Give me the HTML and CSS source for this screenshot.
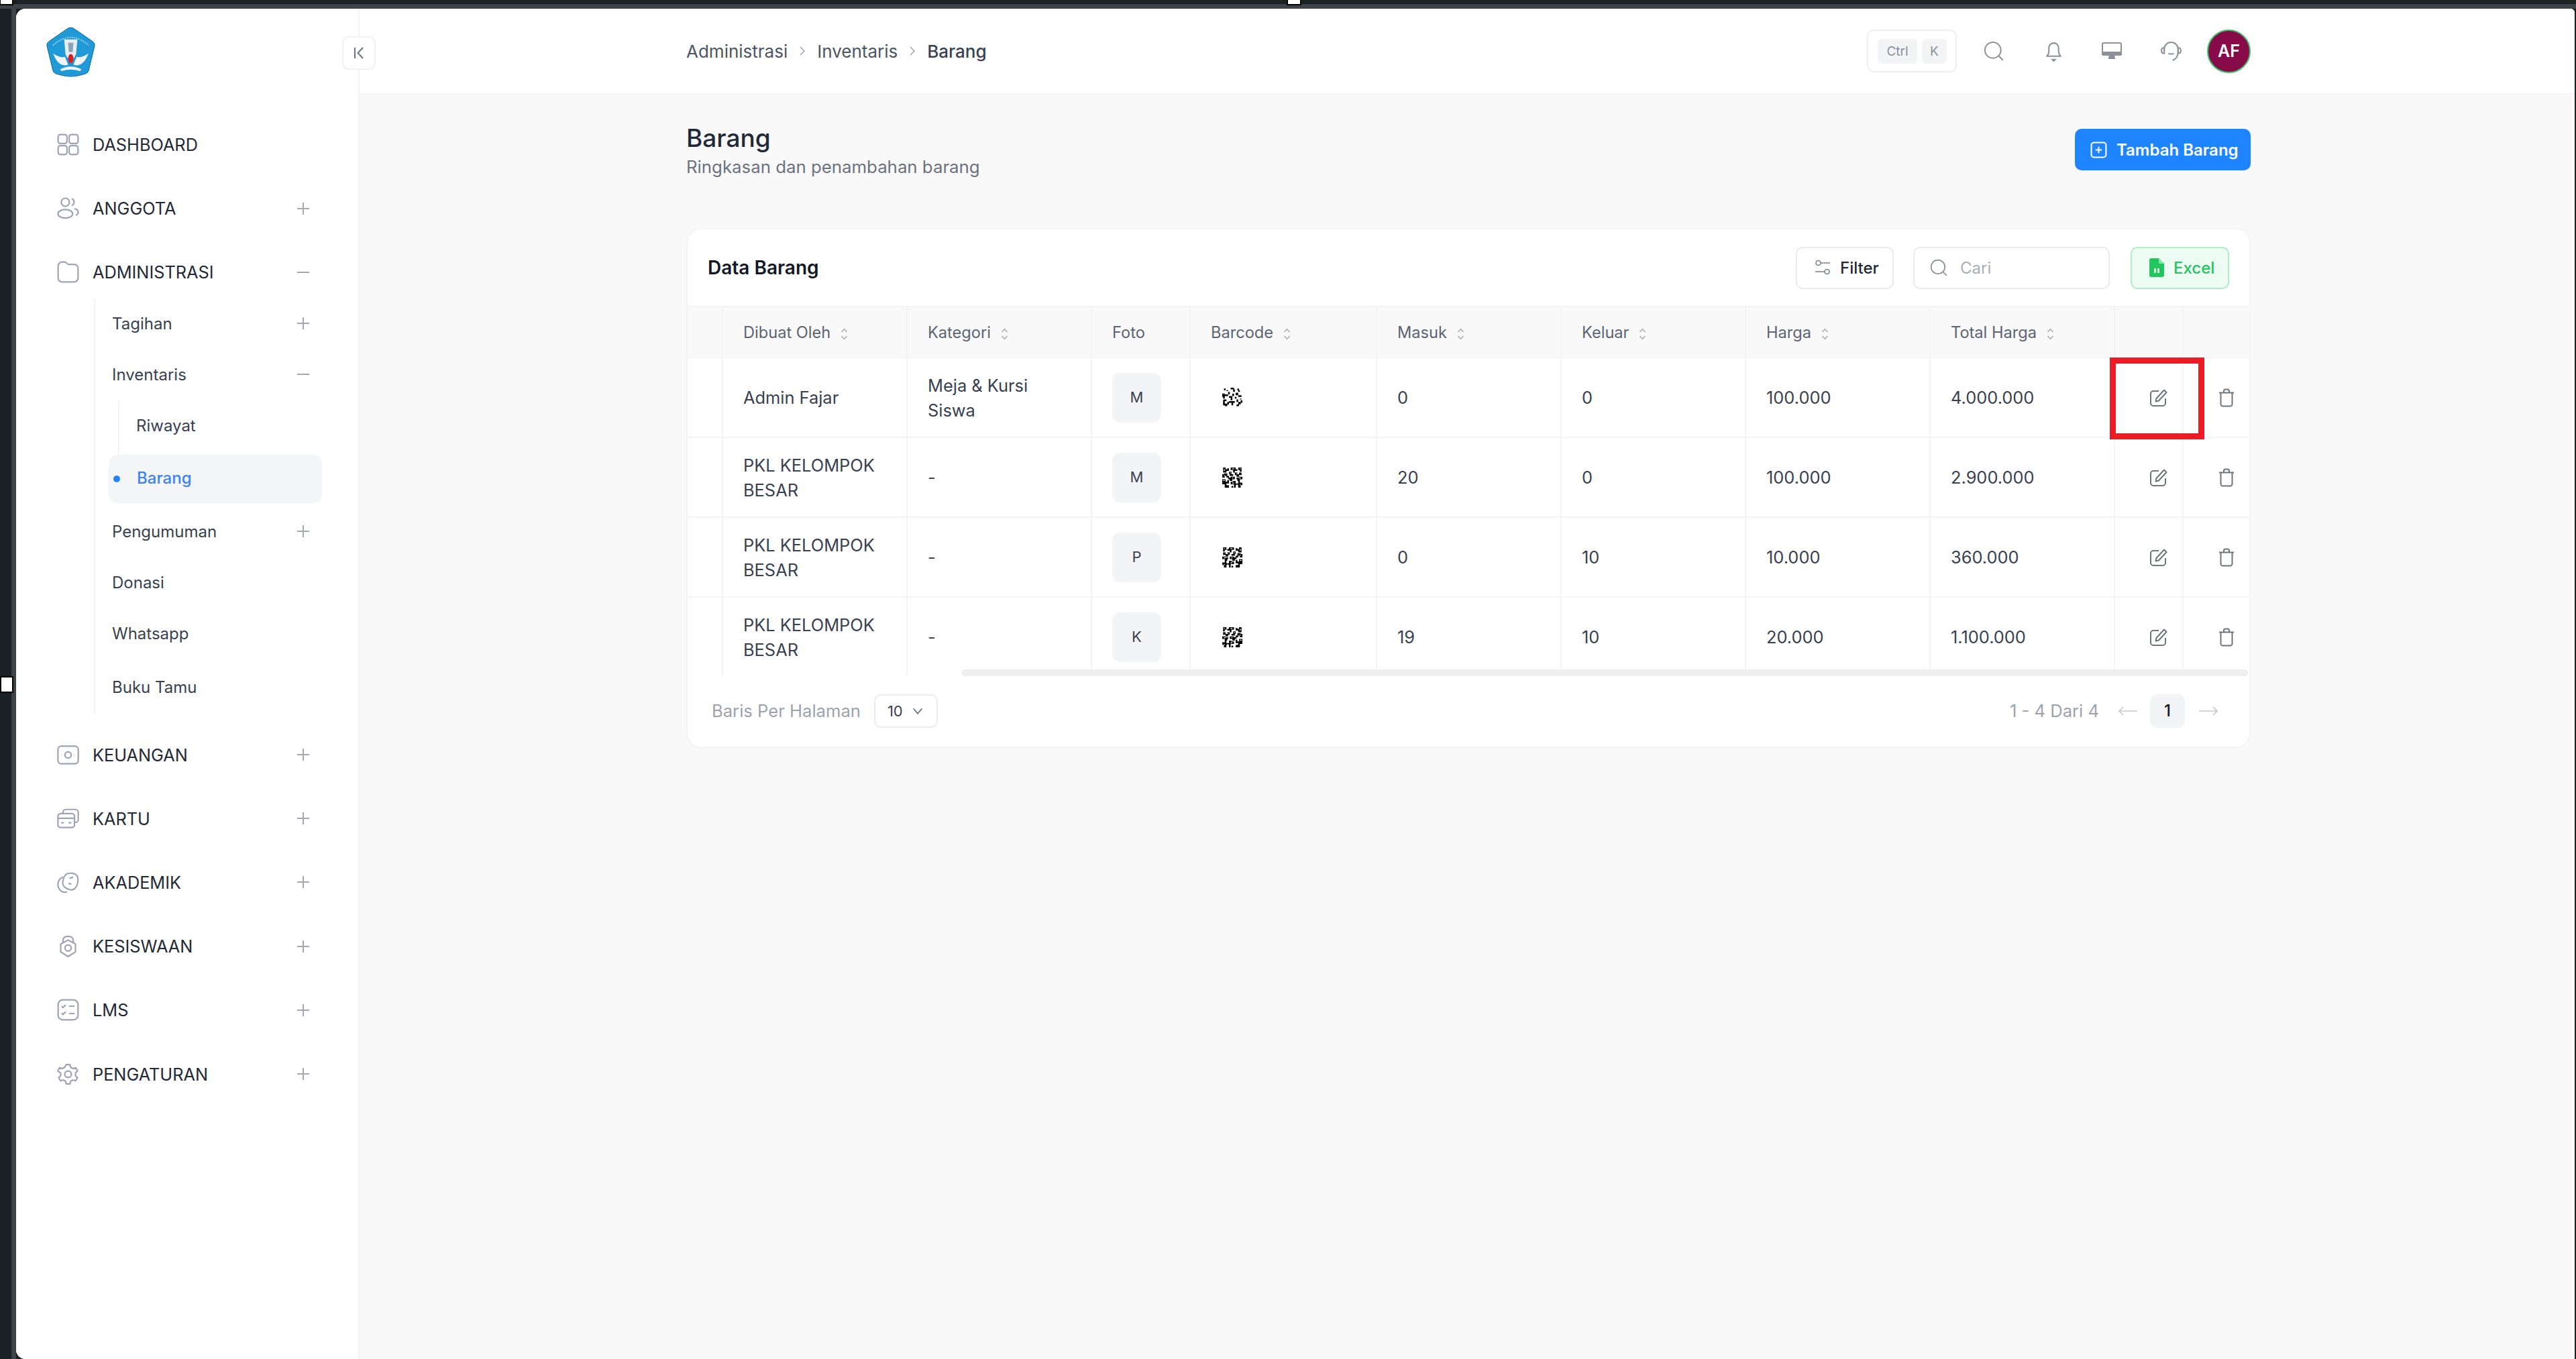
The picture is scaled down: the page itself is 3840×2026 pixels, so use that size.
FILE: index.html
```html
<!DOCTYPE html>
<html lang="en">

<head>
  <meta charset="UTF-8">
  <meta name="viewport" content="width=device-width, initial-scale=1.0">
  <title>Barang</title>
  <link rel="stylesheet" href="styles.css">
</head>

<body>

  <svg class="defs" width="0" height="0">
    <symbol id="i-dash" viewBox="0 0 24 24"><rect x="1.2" y="1.2" width="9.6" height="9.6" rx="2.4"/><rect x="13.2" y="1.2" width="9.6" height="9.6" rx="2.4"/><rect x="1.2" y="13.2" width="9.6" height="9.6" rx="2.4"/><rect x="13.2" y="13.2" width="9.6" height="9.6" rx="2.4"/></symbol>
    <symbol id="i-users" viewBox="0 0 24 24"><circle cx="9" cy="5.5" r="4.4"/><ellipse cx="9" cy="18" rx="8" ry="4.6"/><path d="M16 1.6a4 4 0 0 1 0 7.4M19 12.5c2.6.6 4 2.2 4 3.8 0 1.400-1 2.600-2.700 3.300"/></symbol>
    <symbol id="i-folder" viewBox="0 0 24 24"><path d="M1.200 5.500a4.300 4.300 0 0 1 4.300-4.300h3.200c1.400 0 2.200 2.500 3.600 2.500h6.200a4.300 4.300 0 0 1 4.300 4.300v10.500a4.300 4.300 0 0 1-4.300 4.300h-13a4.300 4.300 0 0 1-4.300-4.300z"/></symbol>
    <symbol id="i-money" viewBox="0 0 24 24"><rect x="1" y="2.500" width="22" height="19" rx="3.500"/><circle cx="12" cy="12" r="3.400"/><path d="M5 12h.5M18.500 12h.5"/></symbol>
    <symbol id="i-card" viewBox="0 0 24 24"><path d="M6.500 6V5a3 3 0 0 1 3-3h10.500a3 3 0 0 1 3 3v8a3 3 0 0 1-3 3h-1"/><rect x="1" y="6.500" width="18" height="15" rx="3"/><path d="M1 11.500h18M4.500 16.500h3M12.500 16.500h3"/></symbol>
    <symbol id="i-acad" viewBox="0 0 24 24"><path d="M6.500 6.200A8.800 8.800 0 0 0 3 20c2 2.500 5 3.200 8 2.200"/><path d="M11 2.600c3.500-1.200 8-.5 10 1.400 2 2 2 6 1 10-1 3.500-3.800 6.800-7.500 6-3.500-.8-7-2.500-8-5.500-1-3.500 1-10.500 4.500-11.900z"/><path d="M13.500 7.500l4-1M12.500 13l3 1"/></symbol>
    <symbol id="i-bell-weight" viewBox="0 0 24 24"><path d="M6.500 8V5.500a4 4 0 0 1 4-4h3a4 4 0 0 1 4 4V8"/><path d="M12 5.500l8 4.200v8.600l-8 5-8-5V9.700z" stroke-linejoin="round"/><circle cx="12" cy="14" r="3.400"/></symbol>
    <symbol id="i-lms" viewBox="0 0 24 24"><rect x="1.200" y="1.200" width="21.600" height="21.600" rx="5"/><path d="M5 8l1.500 1.500L9.500 6.500M5 15.500L6.500 17l3-3M13 8h6M13 16h6"/></symbol>
    <symbol id="i-gear" viewBox="0 0 24 24"><circle cx="12" cy="12" r="3.600"/><path d="M10 1.500h4l.8 3 2.400 1.300 3-.9 2 3.500-2.200 2.200v2.800l2.200 2.200-2 3.500-3-.9-2.400 1.300-.8 3h-4l-.8-3-2.400-1.300-3 .9-2-3.500 2.200-2.200v-2.800L.8 8.400l2-3.500 3 .9 2.400-1.300z" stroke-linejoin="round"/></symbol>
    <symbol id="i-plus" viewBox="0 0 18 18"><path d="M9 0v18M0 9h18"/></symbol>
    <symbol id="i-minus" viewBox="0 0 18 18"><path d="M0 9h18"/></symbol>
    <symbol id="i-search" viewBox="0 0 24 24"><circle cx="11" cy="11" r="9.500"/><path d="M18 18l5 5"/></symbol>
    <symbol id="i-edit" viewBox="0 0 26 26"><path d="M13 3H5a4 4 0 0 0-4 4v14a4 4 0 0 0 4 4h14a4 4 0 0 0 4-4v-7"/><path d="M21 1.500l3.500 3.500L13 17.500l-4.500 1 1-4.500z" stroke-linejoin="round"/></symbol>
    <symbol id="i-trash" viewBox="0 0 24 28"><path d="M1 6.500h22M8 6V4a2.500 2.500 0 0 1 2.500-2.500h3A2.500 2.500 0 0 1 16 4v2"/><path d="M3.500 6.500v17a3 3 0 0 0 3 3h11a3 3 0 0 0 3-3v-17"/></symbol>
    <symbol id="i-sort" viewBox="0 0 11 18"><path d="M1.500 6L5.500 1.500 9.500 6M1.500 12l4 4.500 4-4.500"/></symbol>
    <symbol id="i-chev" viewBox="0 0 12 8"><path d="M1 1l5 6 5-6"/></symbol>
    <symbol id="qr-a" viewBox="0 0 24 24"><path d="M2 1h2v2H2zM5 3h2v1H5zM10 0h4v2h1v3h-2V2h-3zM18 1h2v2h1v2h-2V3h-1zM0 7h3v1h2v2H3v3H1v-2H0zM7 5h2v3H7v2H5V8h2zM12 7h2v3h-2v5h-2v-3H8v-2h4zM16 6h3v3h2v2h-2V9h-3zM21 9h2v2h-2zM2 14h3v2H3v3h3v3H3v-1H1v-6zM8 16h7v2h-2v3h-2v-3H8v2H6v-3h2zM17 14h2v3h3v-2h2v3h-2v2h-2v2h-3v-2h2v-3h-2zM15 11h2v2h-2zM21 13h2v1h-2z"/></symbol>
    <symbol id="qr-b" viewBox="0 0 24 24"><path d="M1 0h3v2h2V1h2v3H5v2H1zM10 0h6v2h2v2h-3v2h-2V3h-3zM19 0h4v5h-2V3h-2zM8 5h3v3h2v2h-4V8H8zM15 6h3v2h2v-2h3v3h-3v2h-3V9h-2zM0 8h2V7h4v3h2v2H5v-2H3v2H0zM10 11h5v3h-3v2h-3v-2H7v-2h3zM17 12h3v-1h4v3h-3v2h-3v-2h-1zM0 14h4v3h2v-2h2v4H5v2h3v3H3v-4H0zM10 17h3v-1h3v3h3v-3h2v2h3v3h-2v3h-3v-3h-3v3h-2v-4h-4zM11 22h2v2h-2z"/><path fill="#fff" d="M2 2h1v2H2zM12 1h2v1h-2zM21 1h1v1h-1zM9 6h1v1H9zM17 7h1v1h-1zM2 9h1v1H2zM12 12h1v1h-1zM20 12h2v1h-2zM1 15h2v1H1zM6 20h2v1H6zM12 18h2v1h-2zM17 20h1v2h-1zM21 20h1v1h-1z"/></symbol>
  </svg>

  <span class="handle handle-top-left"></span>
  <span class="handle handle-top-mid"></span>
  <span class="handle handle-left-mid"></span>

  <div class="app">

    <aside class="sidebar">
      <div class="logo">
        <svg viewBox="0 0 74 76" width="73" height="75">
          <path d="M33 2q4-2 8 0L70 22q4 3 3 7L64 66q-1 4-5 5c-7 2-14 4-22 4s-15-2-22-4q-4-1-5-5L1 29q-1-4 3-7z" fill="#1f9ad6" stroke="#11679e" stroke-width="1"/>
          <path d="M10 28Q37 4 64 28" fill="none" stroke="#9bd4ee" stroke-width="2" stroke-dasharray="2 1.500"/>
          <path d="M27 19h20l-2 22-3 6h-10l-3-6z" fill="#e8edf2"/>
          <path d="M33 24h8l-1 14h-6z" fill="#8aa3b8"/>
          <path d="M10 40c3 6 5 13 13 17 5 2 8 1 10 0l-5-12c-4 2-7 0-8 0-4-1-7-3-10-5zM64 40c-3 6-5 13-13 17-5 2-8 1-10 0l5-12c4 2 7 0 8 0 4-1 7-3 10-5z" fill="#f1f4f6"/>
          <ellipse cx="37" cy="48" rx="4" ry="7" fill="#d2232a"/>
          <path d="M21 64q16-8 32 0l-2 3q-14-5-28 0z" fill="#f1f4f6"/>
        </svg>
      </div>

      <nav class="menu">
        <a class="menu_item"><svg class="menu_icon"><use href="#i-dash"/></svg><span>DASHBOARD</span></a>
        <a class="menu_item"><svg class="menu_icon"><use href="#i-users"/></svg><span>ANGGOTA</span><svg class="toggle"><use href="#i-plus"/></svg></a>
        <div class="menu_group">
          <a class="menu_item"><svg class="menu_icon"><use href="#i-folder"/></svg><span>ADMINISTRASI</span><svg class="toggle"><use href="#i-minus"/></svg></a>
          <div class="submenu">
            <a class="sub_item"><span>Tagihan</span><svg class="toggle"><use href="#i-plus"/></svg></a>
            <a class="sub_item"><span>Inventaris</span><svg class="toggle"><use href="#i-minus"/></svg></a>
            <div class="subsub">
              <a class="subsub_item">Riwayat</a>
            </div>
            <a class="sub_active"><i class="dot"></i>Barang</a>
            <a class="sub_item"><span>Pengumuman</span><svg class="toggle"><use href="#i-plus"/></svg></a>
            <a class="sub_item"><span>Donasi</span></a>
            <a class="sub_item"><span>Whatsapp</span></a>
            <a class="sub_item"><span>Buku Tamu</span></a>
          </div>
        </div>
        <a class="menu_item"><svg class="menu_icon"><use href="#i-money"/></svg><span>KEUANGAN</span><svg class="toggle"><use href="#i-plus"/></svg></a>
        <a class="menu_item"><svg class="menu_icon"><use href="#i-card"/></svg><span>KARTU</span><svg class="toggle"><use href="#i-plus"/></svg></a>
        <a class="menu_item"><svg class="menu_icon"><use href="#i-acad"/></svg><span>AKADEMIK</span><svg class="toggle"><use href="#i-plus"/></svg></a>
        <a class="menu_item"><svg class="menu_icon"><use href="#i-bell-weight"/></svg><span>KESISWAAN</span><svg class="toggle"><use href="#i-plus"/></svg></a>
        <a class="menu_item"><svg class="menu_icon"><use href="#i-lms"/></svg><span>LMS</span><svg class="toggle"><use href="#i-plus"/></svg></a>
        <a class="menu_item"><svg class="menu_icon"><use href="#i-gear"/></svg><span>PENGATURAN</span><svg class="toggle"><use href="#i-plus"/></svg></a>
      </nav>
    </aside>

    <button class="collapse">
      <svg viewBox="0 0 16 18" width="16" height="18"><path d="M2 1v16M14 1L6.500 9 14 17"/></svg>
    </button>

    <div class="page">

      <header class="topbar">
        <div class="topbar_inner">
          <div class="crumbs">
            <span>Administrasi</span>
            <svg class="crumb_sep" viewBox="0 0 8 14"><path d="M1 1l6 6-6 6"/></svg>
            <span>Inventaris</span>
            <svg class="crumb_sep" viewBox="0 0 8 14"><path d="M1 1l6 6-6 6"/></svg>
            <b>Barang</b>
          </div>
          <div class="tools">
            <div class="kbd"><span class="kbd_ctrl">Ctrl</span><span class="kbd_k">K</span></div>
            <svg class="tool tool-search"><use href="#i-search"/></svg>
            <svg class="tool tool-bell" viewBox="0 0 26 30"><path d="M3 22c2-2 3-4 3-8V10a7 7 0 0 1 14 0v4c0 4 1 6 3 8z" stroke-linejoin="round"/><path d="M11 27h4l-2 2z" fill="#8c9198"/></svg>
            <svg class="tool tool-screen" viewBox="0 0 30 26"><path d="M3 1h24a2 2 0 0 1 2 2v14a2 2 0 0 1-2 2H3a2 2 0 0 1-2-2V3a2 2 0 0 1 2-2z"/><path d="M1 15h28v2a2 2 0 0 1-2 2H3a2 2 0 0 1-2-2z" fill="#8c9198"/><path d="M12 19l-1 5h8l-1-5z" fill="#8c9198"/></svg>
            <svg class="tool tool-head" viewBox="0 0 30 30"><path d="M5 15V12a10 10 0 0 1 20 0v3c0 8-4 12-8 13"/><path d="M5 10C2 10 1 12 1 14s1 4 4 4zM25 10c3 0 4 2 4 4s-1 4-4 4z"/><path d="M11 18q4 2 8 0"/></svg>
            <div class="avatar">AF</div>
          </div>
        </div>
      </header>

      <main class="content">

        <div class="title_row">
          <div>
            <h1 class="title">Barang</h1>
            <p class="subtitle">Ringkasan dan penambahan barang</p>
          </div>
          <button class="btn_add">
            <svg viewBox="0 0 24 24" width="25" height="25"><rect x="1.500" y="1.500" width="21" height="21" rx="3.500"/><path d="M12 7.500v9M7.500 12h9"/></svg>
            Tambah Barang
          </button>
        </div>

        <section class="card">
          <div class="card_head">
            <h2 class="card_title">Data Barang</h2>
            <button class="btn_filter">
              <svg viewBox="0 0 24 24" width="24" height="24"><circle cx="5.500" cy="5" r="3.500"/><path d="M9 5h14M1 18h14"/><circle cx="18.500" cy="18" r="3.500"/></svg>
              Filter
            </button>
            <div class="search">
              <svg><use href="#i-search"/></svg>
              <span>Cari</span>
            </div>
            <button class="btn_excel">
              <svg viewBox="0 0 22 28" width="22" height="28"><path d="M3 0h11l8 8v17a3 3 0 0 1-3 3H3a3 3 0 0 1-3-3V3a3 3 0 0 1 3-3z" fill="#22c55e"/><path d="M14 0l8 8h-8z" fill="#86e5a8"/><path d="M7 15h3v7H7zM12 15h3v7h-3z" fill="#d9f8e4"/></svg>
              Excel
            </button>
          </div>

          <div class="table_wrap">
            <table class="data">
              <colgroup>
                <col class="c-gutter"><col class="c-wide"><col class="c-wide"><col class="c-foto"><col class="c-code"><col class="c-wide"><col class="c-wide"><col class="c-wide"><col class="c-wide"><col class="c-act"><col class="c-act">
              </colgroup>
              <thead>
                <tr>
                  <th></th>
                  <th>Dibuat Oleh<svg class="sort"><use href="#i-sort"/></svg></th>
                  <th>Kategori<svg class="sort"><use href="#i-sort"/></svg></th>
                  <th>Foto</th>
                  <th>Barcode<svg class="sort"><use href="#i-sort"/></svg></th>
                  <th>Masuk<svg class="sort"><use href="#i-sort"/></svg></th>
                  <th>Keluar<svg class="sort"><use href="#i-sort"/></svg></th>
                  <th>Harga<svg class="sort"><use href="#i-sort"/></svg></th>
                  <th>Total Harga<svg class="sort"><use href="#i-sort"/></svg></th>
                  <th></th>
                  <th></th>
                </tr>
              </thead>
              <tbody>
                <tr>
                  <td></td>
                  <td>Admin Fajar</td>
                  <td>Meja &amp; Kursi Siswa</td>
                  <td><span class="chip">M</span></td>
                  <td><svg class="qr"><use href="#qr-a"/></svg></td>
                  <td>0</td>
                  <td>0</td>
                  <td>100.000</td>
                  <td>4.000.000</td>
                  <td class="act"><svg class="ic-edit"><use href="#i-edit"/></svg><span class="highlight"></span></td>
                  <td class="act"><svg class="ic-trash"><use href="#i-trash"/></svg></td>
                </tr>
                <tr>
                  <td></td>
                  <td>PKL KELOMPOK BESAR</td>
                  <td>-</td>
                  <td><span class="chip">M</span></td>
                  <td><svg class="qr"><use href="#qr-b"/></svg></td>
                  <td>20</td>
                  <td>0</td>
                  <td>100.000</td>
                  <td>2.900.000</td>
                  <td class="act"><svg class="ic-edit"><use href="#i-edit"/></svg></td>
                  <td class="act"><svg class="ic-trash"><use href="#i-trash"/></svg></td>
                </tr>
                <tr>
                  <td></td>
                  <td>PKL KELOMPOK BESAR</td>
                  <td>-</td>
                  <td><span class="chip">P</span></td>
                  <td><svg class="qr flip"><use href="#qr-b"/></svg></td>
                  <td>0</td>
                  <td>10</td>
                  <td>10.000</td>
                  <td>360.000</td>
                  <td class="act"><svg class="ic-edit"><use href="#i-edit"/></svg></td>
                  <td class="act"><svg class="ic-trash"><use href="#i-trash"/></svg></td>
                </tr>
                <tr>
                  <td></td>
                  <td>PKL KELOMPOK BESAR</td>
                  <td>-</td>
                  <td><span class="chip">K</span></td>
                  <td><svg class="qr flip"><use href="#qr-b"/></svg></td>
                  <td>19</td>
                  <td>10</td>
                  <td>20.000</td>
                  <td>1.100.000</td>
                  <td class="act"><svg class="ic-edit"><use href="#i-edit"/></svg></td>
                  <td class="act"><svg class="ic-trash"><use href="#i-trash"/></svg></td>
                </tr>
              </tbody>
            </table>
            <div class="scrollbar"></div>
          </div>

          <div class="card_foot">
            <span class="muted">Baris Per Halaman</span>
            <div class="select">10<svg class="chev"><use href="#i-chev"/></svg></div>
            <span class="muted range">1 - 4 Dari 4</span>
            <svg class="arrow" viewBox="0 0 28 14"><path d="M28 7H1M7 1L1 7l6 6"/></svg>
            <span class="page_num">1</span>
            <svg class="arrow" viewBox="0 0 28 14"><path d="M0 7h27M21 1l6 6-6 6"/></svg>
          </div>
        </section>

      </main>
    </div>
  </div>

</body>

</html>
```

FILE: styles.css
```css
* {
  box-sizing: border-box;
  font-family: "Inter", "Liberation Sans", sans-serif;
}
html, body {
  height: 100%;
}
body {
  margin: 0;
  padding: 13px 2px 0 24px;
  background: linear-gradient(#1a2124 6px, #3c4248 6px, #3c4248 13px, #1a2124 13px);
  overflow: hidden;
  position: relative;
}
body::before {
  content: "";
  position: absolute;
  left: 17px;
  top: 6px;
  bottom: 0;
  width: 7px;
  background: #3c4248;
}
.defs {
  position: absolute;
}
symbol {
  overflow: visible;
}

/* selection handles from the capture tool */
.handle {
  position: absolute;
  background: #fff;
  border: 2px solid #000;
  z-index: 5;
}
.handle-top-left { left: -1px; top: -8px; width: 21px; height: 16px; }
.handle-top-mid { left: 1918px; top: -8px; width: 22px; height: 16px; }
.handle-left-mid { left: 0; top: 1008px; width: 20px; height: 25px; }

.app {
  display: flex;
  height: 100%;
  position: relative;
  background: #f9f9fa;
  border-radius: 14px 6px 0 14px;
  overflow: hidden;
}

/* sidebar */
.sidebar {
  width: 512px;
  flex: none;
  background: #fff;
  border-right: 2px solid #f3f4f6;
  padding: 27px 0 0 61px;
}
.logo {
  height: 137px;
  margin-left: -16px;
}
.menu {
  display: flex;
  flex-direction: column;
  gap: 18.2px;
  width: 403px;
}
.menu_item, .sub_item {
  display: flex;
  align-items: center;
  height: 77px;
  color: #1f2937;
  font-size: 25.3px;
}
.menu_icon {
  width: 33px;
  height: 33px;
  margin-right: 20px;
  fill: none;
  stroke: #a0a3b5;
  stroke-width: 1.6;
}
.toggle {
  width: 18px;
  height: 18px;
  margin-left: auto;
  margin-right: 27px;
  fill: none;
  stroke: #a5a8b0;
  stroke-width: 2;
}
.menu_group {
  margin-bottom: 4px;
}
.submenu {
  margin-left: 55px;
  padding-left: 25px;
  border-left: 2px solid #f3f4f6;
  height: 620px;
}
.sub_item {
  height: 76px;
  font-size: 24px;
  color: #374151;
}
.sub_item:last-child {
  margin-top: 4px;
}
.subsub {
  margin-left: 9px;
  padding-left: 25px;
  padding-bottom: 6px;
  border-left: 2px solid #f3f4f6;
}
.subsub_item {
  display: flex;
  align-items: center;
  height: 76px;
  font-size: 24px;
  color: #374151;
}
.sub_active {
  display: flex;
  align-items: center;
  width: 318px;
  height: 72px;
  margin-left: -5px;
  padding: 0 0 3px 7px;
  border-radius: 14px;
  background: #f4f5f7;
  color: #3b82f6;
  font-size: 24px;
  font-weight: 500;
  margin-bottom: 4px;
}
.dot {
  width: 10px;
  height: 10px;
  margin: 3px 25px 0 0;
  border-radius: 50%;
  background: #1f84ff;
}

.collapse {
  position: absolute;
  left: 486px;
  top: 41px;
  width: 50px;
  height: 50px;
  padding: 0;
  background: #fff;
  border: 2px solid #f0f1f3;
  border-radius: 10px;
  display: flex;
  align-items: center;
  justify-content: center;
}
.collapse svg {
  fill: none;
  stroke: #6b7280;
  stroke-width: 2;
}

/* page */
.page {
  flex: 1;
  min-width: 0;
}
.topbar {
  height: 128px;
  background: #fff;
  border-bottom: 2px solid #f3f4f6;
}
.topbar_inner {
  width: 2332px;
  margin-left: 487px;
  height: 100%;
  display: flex;
  align-items: center;
  justify-content: space-between;
}
.crumbs {
  display: flex;
  align-items: center;
  gap: 18px;
  font-size: 26px;
  color: #4b5563;
}
.crumbs b {
  font-weight: 500;
  color: #374151;
}
.crumb_sep {
  width: 8px;
  height: 14px;
  fill: none;
  stroke: #9ca3af;
  stroke-width: 1.5;
}
.tools {
  display: flex;
  align-items: center;
}
.kbd {
  display: flex;
  align-items: center;
  gap: 7px;
  width: 134px;
  height: 64px;
  padding-left: 14px;
  background: #fff;
  border: 2px solid #eeeff1;
  border-radius: 10px;
  font-size: 19px;
  color: #8b9099;
  margin-right: 40px;
}
.kbd span {
  display: flex;
  align-items: center;
  justify-content: center;
  height: 37px;
  background: #f3f4f6;
  border-radius: 6px;
}
.kbd_ctrl { width: 59px; }
.kbd_k { width: 37px; }
.tool {
  fill: none;
  stroke: #8c9198;
  stroke-width: 2;
}
.tool-search { width: 30px; height: 30px; margin-right: 61px; stroke-width: 1.6; }
.tool-bell { width: 27px; height: 31px; margin-right: 58px; }
.tool-screen { width: 30px; height: 26px; margin-right: 58px; }
.tool-head { width: 31px; height: 31px; margin-right: 38px; }
.avatar {
  width: 65px;
  height: 65px;
  border-radius: 50%;
  background: #880b49;
  border: 2px solid #3fbf6a;
  color: #fff;
  font-size: 25px;
  font-weight: 600;
  display: flex;
  align-items: center;
  justify-content: center;
}

.content {
  width: 2332px;
  margin-left: 487px;
}
.title_row {
  display: flex;
  justify-content: space-between;
  padding-top: 40px;
  height: 199px;
}
.title {
  margin: 0;
  font-size: 37px;
  line-height: 50px;
  font-weight: 500;
  color: #1f2937;
}
.subtitle {
  margin: 0;
  font-size: 25.8px;
  line-height: 36px;
  color: #6b7280;
}
.btn_add {
  display: flex;
  align-items: center;
  gap: 14px;
  width: 262px;
  height: 62px;
  margin-top: 11px;
  padding: 0 0 0 23px;
  background: #1f84ff;
  border: 0;
  border-radius: 10px;
  color: #fff;
  font-size: 24px;
  font-weight: 600;
}
.btn_add svg {
  fill: none;
  stroke: #fff;
  stroke-width: 2;
}

/* card */
.card {
  background: #fff;
  border: 2px solid #f3f4f6;
  border-radius: 22px;
  height: 775px;
  overflow: hidden;
}
.card_head {
  display: flex;
  align-items: center;
  height: 116px;
  padding: 0 30px 0 30px;
  border-bottom: 2px solid #f3f4f6;
}
.card_title {
  margin: 0 auto 0 0;
  font-size: 28px;
  font-weight: 600;
  color: #111827;
}
.btn_filter, .search, .btn_excel {
  display: flex;
  align-items: center;
  height: 63px;
  border-radius: 10px;
  border: 2px solid #e9eaec;
  background: #fff;
  font-size: 24px;
}
.btn_filter {
  width: 146px;
  gap: 14px;
  padding: 0 0 0 26px;
  color: #1f2937;
  font-weight: 500;
}
.btn_filter svg {
  fill: none;
  stroke: #7b8088;
  stroke-width: 1.6;
}
.search {
  width: 293px;
  margin-left: 29px;
  padding-left: 23px;
  gap: 19px;
  color: #a9aeb6;
}
.search svg {
  width: 26px;
  height: 26px;
  fill: none;
  stroke: #8c9198;
  stroke-width: 1.6;
}
.btn_excel {
  width: 147px;
  margin-left: 31px;
  padding: 0 0 0 26px;
  gap: 14px;
  background: #edfcf2;
  border-color: #aeeec5;
  color: #22c55e;
  font-weight: 500;
}

/* table */
.table_wrap {
  height: 550px;
  position: relative;
  overflow: hidden;
}
.data {
  width: 2329px;
  table-layout: fixed;
  border-collapse: collapse;
  font-size: 25.4px;
  color: #374151;
}
.c-gutter { width: 52px; }
.c-wide { width: 275px; }
.c-foto { width: 147px; }
.c-code { width: 278px; }
.c-act { width: 102px; }
.data th, .data td {
  padding: 0 30px;
  text-align: left;
  border-left: 2px solid #f3f4f6;
  border-bottom: 2px solid #f3f4f6;
}
.data tr > :first-child {
  border-left: 0;
}
.data th {
  height: 75px;
  background: #f9f9fa;
  font-weight: 400;
  font-size: 23.6px;
  color: #5b6472;
}
.data td {
  height: 119px;
  line-height: 37px;
}
.sort {
  width: 11px;
  height: 18px;
  margin-left: 15px;
  vertical-align: -3px;
  fill: none;
  stroke: #a4a9b0;
  stroke-width: 1.4;
}
.chip {
  display: flex;
  align-items: center;
  justify-content: center;
  width: 73px;
  height: 74px;
  border-radius: 12px;
  background: #f3f4f6;
  font-size: 22px;
  color: #374151;
}
.qr {
  width: 30px;
  height: 30px;
  display: block;
  margin-left: 17px;
  fill: #000;
}
.flip {
  transform: scaleX(-1);
}
.data td.act {
  padding: 0;
  position: relative;
}
.ic-edit {
  display: block;
  width: 26px;
  height: 26px;
  margin-left: 52px;
  fill: none;
  stroke: #6f747b;
  stroke-width: 2;
}
.ic-trash {
  display: block;
  width: 24px;
  height: 28px;
  margin-left: 52px;
  fill: none;
  stroke: #6f747b;
  stroke-width: 2;
}
.highlight {
  position: absolute;
  left: -8px;
  top: -1px;
  width: 141px;
  height: 122px;
  border: 9px solid #ed1c24;
  z-index: 2;
}
.scrollbar {
  position: absolute;
  left: 408px;
  right: 2px;
  bottom: 0;
  height: 10px;
  border-radius: 5px;
  background: #efefef;
}

.card_foot {
  display: flex;
  align-items: center;
  height: 103px;
  padding: 0 47px 0 36px;
  font-size: 25.6px;
}
.muted {
  color: #9ca3af;
}
.select {
  display: flex;
  align-items: center;
  gap: 14px;
  width: 95px;
  height: 50px;
  margin-left: 20px;
  padding-left: 18px;
  border: 2px solid #ebecee;
  border-radius: 10px;
  color: #374151;
  font-size: 22px;
}
.chev {
  width: 16px;
  height: 10px;
  fill: none;
  stroke: #6b7280;
  stroke-width: 1.4;
}
.range {
  margin-left: auto;
}
.arrow {
  width: 28px;
  height: 14px;
  margin-left: 29px;
  fill: none;
  stroke: #c4c8cd;
  stroke-width: 1.6;
}
.page_num {
  display: flex;
  align-items: center;
  justify-content: center;
  width: 52px;
  height: 50px;
  margin-left: 19px;
  margin-right: -8px;
  border-radius: 10px;
  background: #f3f4f6;
  color: #111827;
  font-size: 24px;
  font-weight: 500;
}
```
